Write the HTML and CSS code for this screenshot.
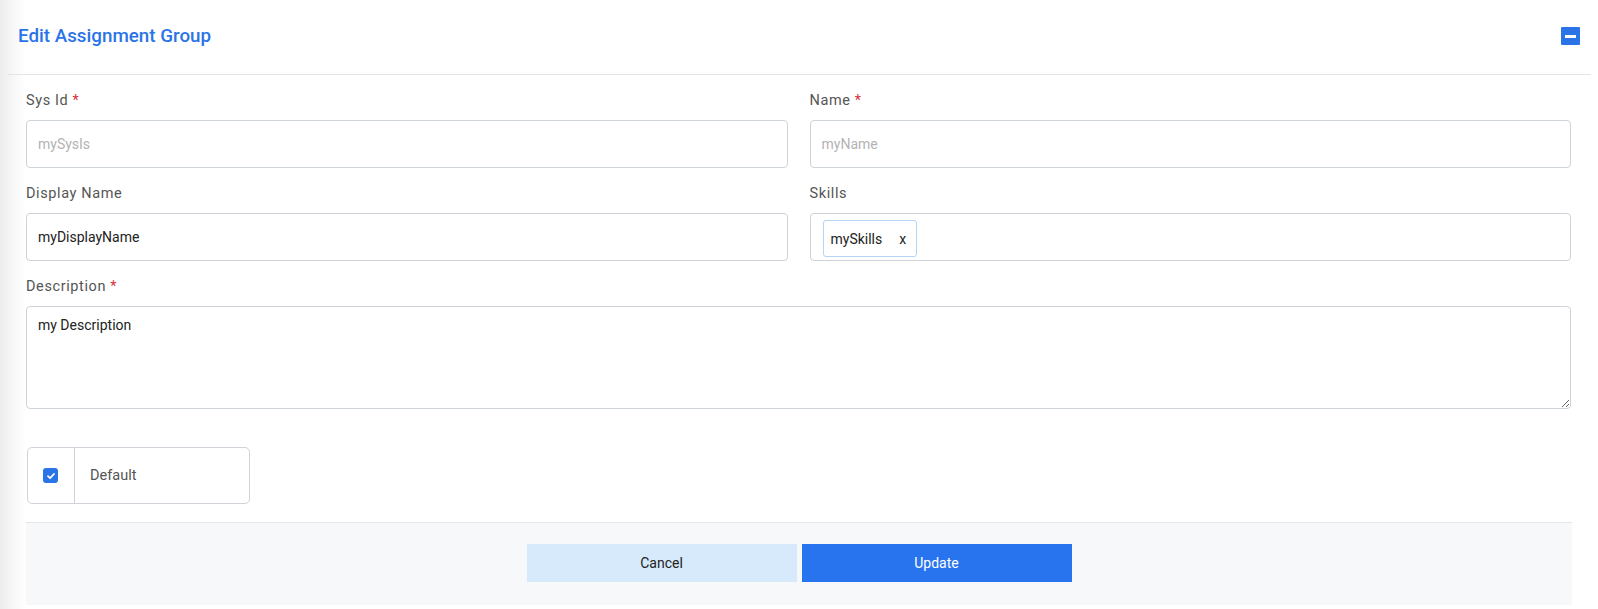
FILE: index.html
```html
<!DOCTYPE html>
<html lang="en">
<head>
    <meta charset="UTF-8">
    <meta name="viewport" content="width=device-width, initial-scale=1.0">
    <title>Edit Assignment Group</title>
    <link rel="stylesheet" href="styles.css">
</head>
<body>
    <div class="panel">
        <div class="panel-header">
            <h2 class="panel-title">Edit Assignment Group</h2>
            <button class="collapse-btn" title="Collapse"><span class="minus"></span></button>
        </div>

        <form class="edit-form" onsubmit="return false;">
            <div class="form-grid">
                <div class="field">
                    <label for="sysId">Sys Id <span class="req">*</span></label>
                    <input type="text" id="sysId" class="text-input" placeholder="mySysIs">
                </div>
                <div class="field">
                    <label for="name">Name <span class="req">*</span></label>
                    <input type="text" id="name" class="text-input" placeholder="myName">
                </div>
                <div class="field">
                    <label for="displayName">Display Name</label>
                    <input type="text" id="displayName" class="text-input" value="myDisplayName">
                </div>
                <div class="field">
                    <label>Skills</label>
                    <div class="tag-input">
                        <span class="tag">mySkills <span class="tag-remove">x</span></span>
                    </div>
                </div>
                <div class="field wide">
                    <label for="description">Description <span class="req">*</span></label>
                    <textarea id="description" class="text-area">my Description</textarea>
                </div>
            </div>

            <div class="check-box">
                <div class="check-cell">
                    <span class="check">
                        <svg width="10" height="10" viewBox="0 0 10 10"><path d="M2 5.2 L4.1 7.2 L8 3" fill="none" stroke="#fff" stroke-width="1.8" stroke-linecap="round" stroke-linejoin="round"/></svg>
                    </span>
                </div>
                <div class="check-label">Default</div>
            </div>

            <div class="form-footer">
                <button class="btn btn-cancel" type="button">Cancel</button>
                <button class="btn btn-update" type="submit">Update</button>
            </div>
        </form>
    </div>
</body>
</html>
```

FILE: styles.css
```css
body {
    margin: 0;
    font-family: Roboto, "Liberation Sans", Arial, sans-serif;
    background: linear-gradient(to right, #ececec 0, #f8f8f8 14px, #fff 26px) no-repeat;
    background-color: #fff;
    min-height: 609px;
}
.panel {
    padding-bottom: 3px;
}
.panel-header {
    display: flex;
    align-items: center;
    justify-content: space-between;
    height: 74px;
    margin: 0 7px;
    padding: 0 11px 0 11px;
    border-bottom: 1px solid #e4e4e4;
}
.panel-title {
    margin: 0;
    font-size: 18.8px;
    font-weight: 500;
    color: #2a74e8;
    padding-bottom: 3px;
}
.collapse-btn {
    width: 19px;
    height: 18px;
    padding: 0;
    border: none;
    border-radius: 1px;
    background-color: #2a74e8;
    display: flex;
    align-items: center;
    justify-content: center;
    cursor: pointer;
    margin-top: -2px;
}
.minus {
    display: block;
    width: 11px;
    height: 3px;
    background: #fff;
}
.edit-form {
    padding: 16px 27px 0 26px;
}
.form-grid {
    display: grid;
    grid-template-columns: 1fr 1fr;
    column-gap: 22px;
}
.field {
    margin-bottom: 16px;
}
.field.wide {
    grid-column: 1 / 3;
    margin-bottom: 0;
}
.field label {
    display: block;
    font-size: 14.5px;
    line-height: 20px;
    letter-spacing: 0.6px;
    color: #555;
    margin-bottom: 9px;
}
.req {
    color: #d9303a;
}
.text-input,
.tag-input,
.text-area {
    box-sizing: border-box;
    width: 100%;
    border: 1px solid #ced3d9;
    border-radius: 4px;
    font-family: inherit;
    font-size: 14px;
    color: #222;
    background: #fff;
}
.text-input {
    height: 48px;
    padding: 0 11px;
    outline: none;
}
.text-input::placeholder {
    color: #b3b3b3;
}
.tag-input {
    height: 48px;
    padding: 6px 12px;
}
.tag {
    display: inline-flex;
    align-items: center;
    box-sizing: border-box;
    height: 37px;
    padding: 0 10px 0 7px;
    border: 1px solid #b4d5f3;
    border-radius: 3px;
    font-size: 14px;
    color: #222;
}
.tag-remove {
    margin-left: 17px;
}
.text-area {
    display: block;
    height: 103px;
    padding: 10px 11px;
    outline: none;
    resize: vertical;
}
.check-box {
    display: flex;
    width: 223px;
    height: 57px;
    box-sizing: border-box;
    margin-top: 38px;
    margin-left: 1px;
    border: 1px solid #d0d4da;
    border-radius: 5px;
}
.check-cell {
    width: 46px;
    display: flex;
    align-items: center;
    justify-content: center;
    border-right: 1px solid #d0d4da;
}
.check {
    width: 15px;
    height: 15px;
    border-radius: 3px;
    background-color: #2a74e8;
    display: flex;
    align-items: center;
    justify-content: center;
    margin-left: -1px;
}
.check-label {
    display: flex;
    align-items: center;
    padding-left: 15px;
    font-size: 14.5px;
    color: #555;
}
.form-footer {
    display: flex;
    justify-content: center;
    gap: 5px;
    height: 83px;
    box-sizing: border-box;
    align-items: center;
    margin-top: 18px;
    margin-right: -1px;
    padding-bottom: 2px;
    border-top: 1px solid #e6e6e6;
    background-color: #f6f8fa;
}
.btn {
    width: 270px;
    height: 38px;
    border: none;
    font-family: inherit;
    font-size: 14px;
    cursor: pointer;
}
.btn-cancel {
    background-color: #d6eafb;
    color: #222;
}
.btn-update {
    background-color: #2874ee;
    color: #fff;
}
```
